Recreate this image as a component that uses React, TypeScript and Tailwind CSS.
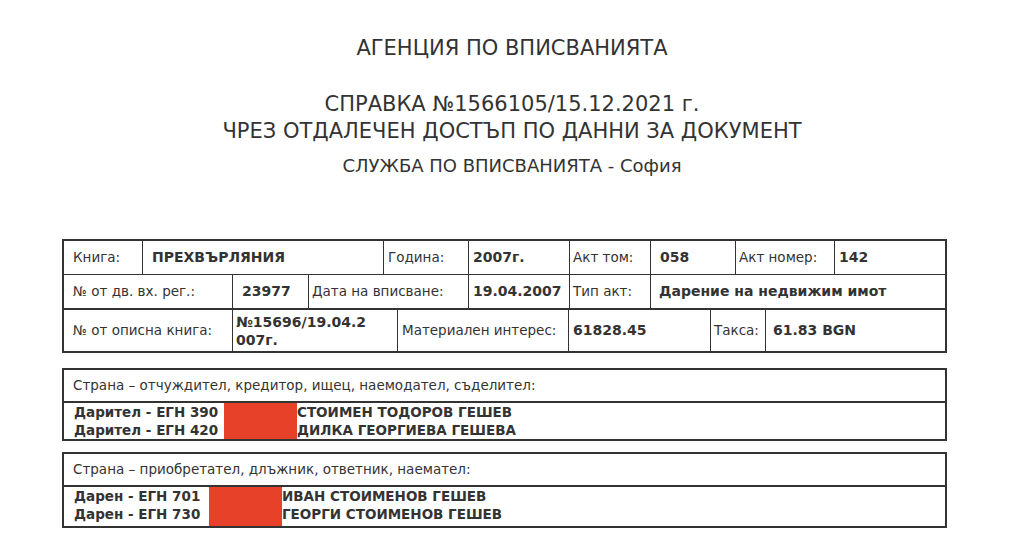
const font = { fontFamily: '"DejaVu Sans", sans-serif' }

function Cell({
  w,
  pl,
  bold,
  children,
  last,
}: {
  w: number
  pl: number
  bold?: boolean
  children: React.ReactNode
  last?: boolean
}) {
  return (
    <div
      className={`flex items-center whitespace-nowrap ${bold ? 'font-bold text-[14px]' : 'text-[13.5px]'} leading-[19px] ${last ? '' : 'border-r border-[#333]'}`}
      style={{ width: w, paddingLeft: pl }}
    >
      {children}
    </div>
  )
}

function Party({ title, rows, redact, pb = 0 }: { title: string; rows: string[][]; redact: number; pb?: number }) {
  return (
    <div className="w-[885px] border-2 border-[#333]">
      <div className="h-[33px] flex items-center px-[9px] text-[13.5px] border-b-2 border-[#333]">{title}</div>
      <div className="relative px-[10px] text-[13.5px] leading-[18px] font-bold whitespace-nowrap" style={{ paddingBottom: pb }}>
        {rows.map((r, i) => (
          <div key={i} className="flex">
            <span className="shrink-0 overflow-hidden" style={{ width: redact + 73 }}>
              {r[0]}
            </span>
            <span>{r[1]}</span>
          </div>
        ))}
        <div className="absolute top-0 bottom-0 w-[73px] bg-[#e8412a]" style={{ left: redact + 10 }} />
      </div>
    </div>
  )
}

export default function App() {
  return (
    <div className="min-h-[538px] bg-white text-[#333]" style={font}>
      <div className="pt-[34px] flex flex-col items-center">
        <div className="text-[21px] leading-[28px]">АГЕНЦИЯ ПО ВПИСВАНИЯТА</div>
        <div className="mt-[28px] text-[21px] leading-[28px]">СПРАВКА №1566105/15.12.2021 г.</div>
        <div className="text-[21px] leading-[27px]">ЧРЕЗ ОТДАЛЕЧЕН ДОСТЪП ПО ДАННИ ЗА ДОКУМЕНТ</div>
        <div className="mt-[10px] text-[18px] leading-[22px]">СЛУЖБА ПО ВПИСВАНИЯТА - София</div>
      </div>

      <div className="ml-[62px] mt-[62px] w-[885px] border-2 border-[#333]">
        <div className="flex h-[34px] border-b border-[#333]">
          <Cell w={79} pl={9}>Книга:</Cell>
          <Cell w={241} pl={9} bold>ПРЕХВЪРЛЯНИЯ</Cell>
          <Cell w={85} pl={4}>Година:</Cell>
          <Cell w={101} pl={4} bold>2007г.</Cell>
          <Cell w={81} pl={3}>Акт том:</Cell>
          <Cell w={85} pl={9} bold>058</Cell>
          <Cell w={99} pl={3}>Акт номер:</Cell>
          <Cell w={110} pl={4} bold last>142</Cell>
        </div>
        <div className="flex h-[35px] border-b-2 border-[#333]">
          <Cell w={169} pl={9}>№ от дв. вх. рег.:</Cell>
          <Cell w={76} pl={9} bold>23977</Cell>
          <Cell w={160} pl={3}>Дата на вписване:</Cell>
          <Cell w={101} pl={4} bold>19.04.2007</Cell>
          <Cell w={81} pl={3}>Тип акт:</Cell>
          <Cell w={294} pl={8} bold last>Дарение на недвижим имот</Cell>
        </div>
        <div className="flex h-[41px]">
          <Cell w={169} pl={9}>№ от описна книга:</Cell>
          <Cell w={165} pl={3} bold>
            <span className="leading-[18px]">
              №15696/19.04.2
              <br />
              007г.
            </span>
          </Cell>
          <Cell w={171} pl={4}>Материален интерес:</Cell>
          <Cell w={142} pl={4} bold>61828.45</Cell>
          <Cell w={55} pl={3}>Такса:</Cell>
          <Cell w={179} pl={7} bold last>61.83 BGN</Cell>
        </div>
      </div>

      <div className="ml-[62px] mt-[15px]">
        <Party
          title="Страна – отчуждител, кредитор, ищец, наемодател, съделител:"
          rows={[
            ['Дарител - ЕГН 390', 'СТОИМЕН ТОДОРОВ ГЕШЕВ'],
            ['Дарител - ЕГН 420', 'ДИЛКА ГЕОРГИЕВА ГЕШЕВА'],
          ]}
          redact={150}
        />
      </div>
      <div className="ml-[62px] mt-[11px]">
        <Party
          title="Страна – приобретател, длъжник, ответник, наемател:"
          rows={[
            ['Дарен - ЕГН 701', 'ИВАН СТОИМЕНОВ ГЕШЕВ'],
            ['Дарен - ЕГН 730', 'ГЕОРГИ СТОИМЕНОВ ГЕШЕВ'],
          ]}
          redact={135}
          pb={3}
        />
      </div>
    </div>
  )
}
